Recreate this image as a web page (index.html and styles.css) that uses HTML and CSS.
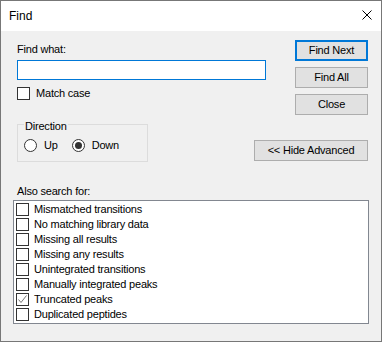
FILE: index.html
```html
<!DOCTYPE html>
<html lang="en">
<head>
    <meta charset="UTF-8">
    <title>Find</title>
    <link rel="stylesheet" href="styles.css">
</head>
<body>
    <div class="window">
        <!-- Title bar -->
        <div class="titlebar">
            <span class="title">Find</span>
            <svg class="close" width="10" height="10" viewBox="0 0 10 10">
                <path d="M0.5 0.5 L9.5 9.5 M9.5 0.5 L0.5 9.5" stroke="#000" stroke-width="1" fill="none"/>
            </svg>
        </div>

        <div class="content">
            <div class="top-row">
                <div class="find-col">
                    <div class="lbl">Find what:</div>
                    <div class="textbox"></div>
                    <div class="check-row">
                        <span class="box"></span>
                        <span>Match case</span>
                    </div>
                </div>
                <div class="buttons">
                    <div class="btn default">Find Next</div>
                    <div class="btn">Find All</div>
                    <div class="btn">Close</div>
                </div>
            </div>

            <div class="mid-row">
                <div class="direction">
                    <span class="legend">Direction</span>
                    <div class="radios">
                        <span class="radio"></span>
                        <span class="radio-text">Up</span>
                        <span class="radio checked"></span>
                        <span class="radio-text">Down</span>
                    </div>
                </div>
                <div class="btn advanced">&lt;&lt; Hide Advanced</div>
            </div>

            <div class="also">Also search for:</div>
            <div class="listbox">
                <div class="item"><span class="box"></span>Mismatched transitions</div>
                <div class="item"><span class="box"></span>No matching library data</div>
                <div class="item"><span class="box"></span>Missing all results</div>
                <div class="item"><span class="box"></span>Missing any results</div>
                <div class="item"><span class="box"></span>Unintegrated transitions</div>
                <div class="item"><span class="box"></span>Manually integrated peaks</div>
                <div class="item">
                    <span class="box">
                        <svg width="11" height="11" viewBox="0 0 11 11">
                            <path d="M1.5 5.5 L4 8.5 L9.5 1.5" stroke="#777" stroke-width="1" fill="none"/>
                        </svg>
                    </span>Truncated peaks
                </div>
                <div class="item"><span class="box"></span>Duplicated peptides</div>
            </div>
        </div>
    </div>
</body>
</html>
```

FILE: styles.css
```css
body {
    margin: 0;
    font-family: "Liberation Sans", Arial, sans-serif;
    font-size: 11px;
    line-height: 13px;
    letter-spacing: -0.2px;
    color: #000;
}

.window {
    width: 382px;
    height: 342px;
    box-sizing: border-box;
    border: 1px solid #777;
    display: flex;
    flex-direction: column;
    background: #f0f0f0;
}

.titlebar {
    height: 30px;
    background: #fff;
    display: flex;
    align-items: center;
    padding-left: 8px;
    flex-shrink: 0;
}

.title {
    font-size: 12px;
    line-height: 14px;
    letter-spacing: 0;
}

.close {
    margin-left: auto;
    margin-right: 9px;
    align-self: flex-start;
    margin-top: 9px;
}

.content {
    flex: 1;
    padding: 9px 13px 0 16px;
}

.top-row {
    display: flex;
    justify-content: space-between;
}

.find-col {
    width: 249px;
}

.lbl {
    margin-top: 3px;
    margin-bottom: 4px;
}

.textbox {
    height: 20px;
    box-sizing: border-box;
    border: 1px solid #0078d7;
    background: #fff;
}

.check-row {
    margin-top: 7px;
    display: flex;
    align-items: center;
    gap: 6px;
}

.box {
    width: 13px;
    height: 13px;
    box-sizing: border-box;
    border: 1px solid #333;
    background: #fff;
    display: flex;
    align-items: center;
    justify-content: center;
    flex-shrink: 0;
}

.buttons {
    width: 73px;
    display: flex;
    flex-direction: column;
    gap: 6px;
}

.btn {
    height: 21px;
    box-sizing: border-box;
    border: 1px solid #adadad;
    background: #e1e1e1;
    display: flex;
    align-items: center;
    justify-content: center;
}

.btn.default {
    border: 2px solid #0078d7;
}

.mid-row {
    display: flex;
    justify-content: space-between;
    align-items: flex-start;
    margin-top: 9px;
}

.direction {
    position: relative;
    width: 131px;
    box-sizing: border-box;
    border: 1px solid #dcdcdc;
    padding: 14px 0 9px 6px;
}

.legend {
    position: absolute;
    left: 6px;
    top: -5px;
    padding: 0 1px;
    background: #f0f0f0;
}

.radios {
    display: flex;
    align-items: center;
    height: 13px;
}

.radio {
    width: 13px;
    height: 13px;
    box-sizing: border-box;
    border: 1px solid #333;
    border-radius: 50%;
    background: #fff;
    display: flex;
    align-items: center;
    justify-content: center;
}

.radio.checked::after {
    content: "";
    width: 7px;
    height: 7px;
    border-radius: 50%;
    background: #333;
}

.radio-text {
    margin-left: 7px;
    margin-right: 14px;
}

.btn.advanced {
    width: 114px;
    margin-top: 16px;
}

.also {
    margin-top: 23px;
}

.listbox {
    margin: 2px -1px 0 -4px;
    height: 124px;
    box-sizing: border-box;
    border: 1px solid #828790;
    background: #fff;
    padding-top: 1px;
}

.item {
    height: 15px;
    line-height: 15px;
    display: flex;
    align-items: center;
    gap: 5px;
    padding-left: 2px;
}
```
